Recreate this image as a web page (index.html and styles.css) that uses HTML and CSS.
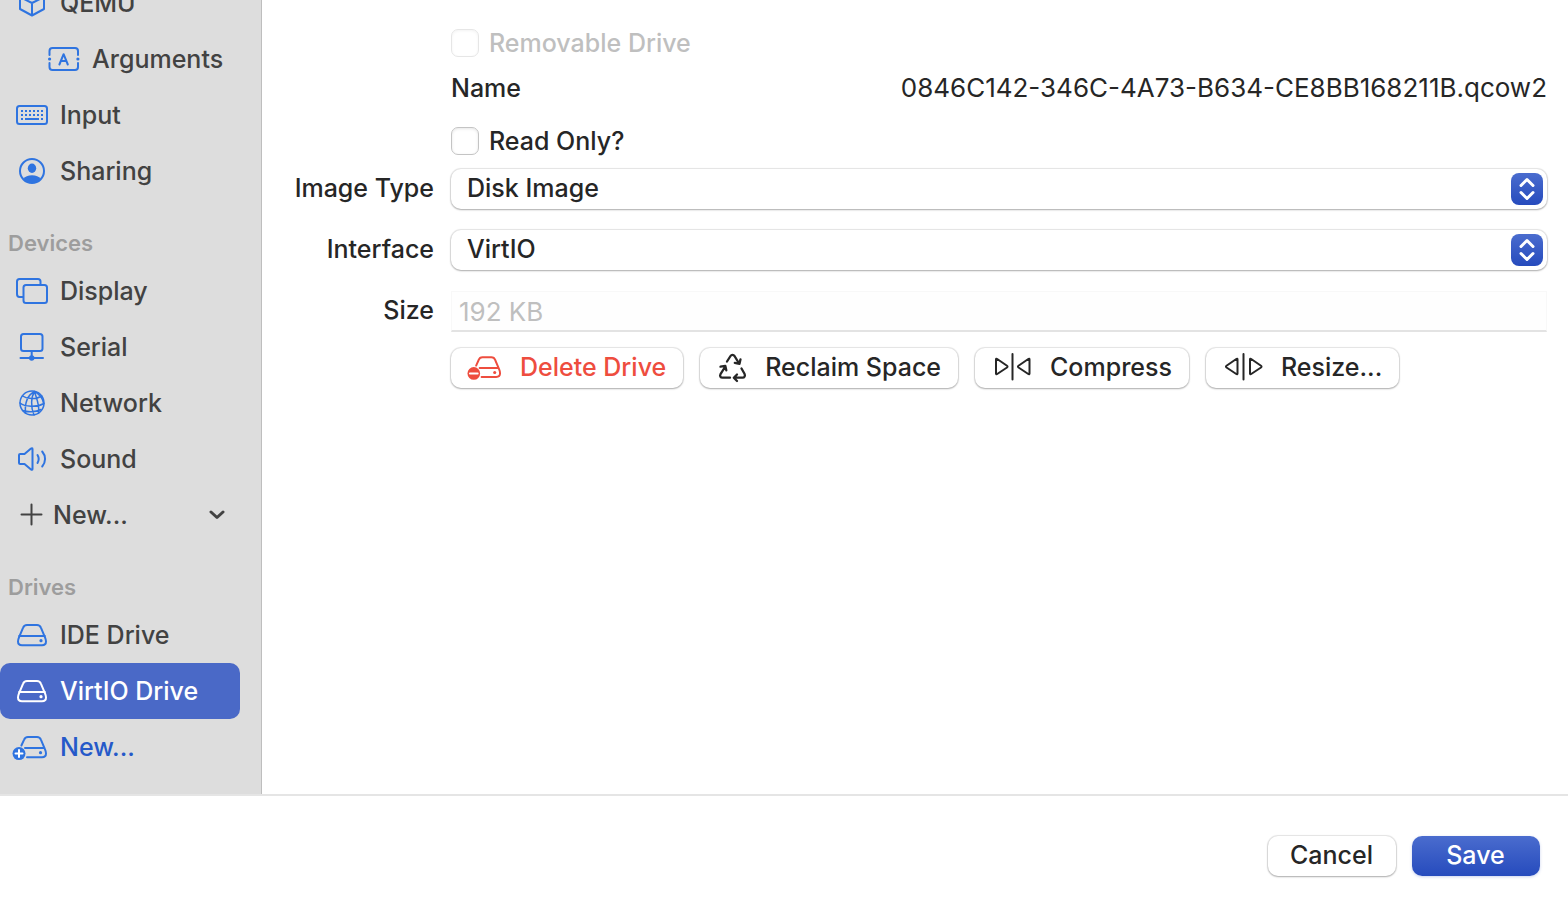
FILE: index.html
```
<!DOCTYPE html>
<html lang="en">
<head>
<meta charset="utf-8">
<meta name="viewport" content="width=device-width, initial-scale=1">
<title>Drive settings</title>
<link rel="stylesheet" href="styles.css">
</head>
<body>
<svg class="defs" aria-hidden="true">
  <symbol id="drive" viewBox="0 0 32 32">
    <path d="M2 22.500C2 20.800 2.400 19.700 3 18.300L7 8.800C7.700 6.800 9 5.900 11 5.900H21C23 5.900 24.300 6.800 25 8.800L29 18.300C29.600 19.700 30 20.800 30 22.500C30 25 28.400 26.200 26 26.200H6C3.600 26.200 2 25 2 22.500Z M3 17H29"/>
    <circle cx="25" cy="21.700" r="1.600" class="solid"/>
  </symbol>
  <symbol id="drive-badged" viewBox="0 0 36 32">
    <path d="M9.400 14.500L12 8.800C12.700 6.800 14 5.900 16 5.900H25C27 5.900 28.300 6.800 29 8.800L33 18.300C33.600 19.700 34 20.800 34 22.500C34 25 32.400 26.200 30 26.200H15 M13 17H32.500"/>
    <circle cx="28.500" cy="21.700" r="1.600" class="solid"/>
    <circle cx="7" cy="22.600" r="6.500" class="solid"/>
  </symbol>
</svg>
<div class="window">
  <div class="body">
    <nav class="sidebar" aria-label="Settings">
      <div class="list">
        <a class="item" href="#qemu"><svg class="icon" width="32" height="32" viewBox="0 0 32 32"><path d="M16 4L28 10V22L16 28.500L4 22V10ZM4 10L16 16L28 10M16 16V28.500"/></svg>QEMU</a>
        <a class="item nested" href="#arguments"><svg class="icon" width="32" height="32" viewBox="0 0 32 32"><path d="M1.500 12V8C1.500 6 2.500 5 4.500 5H27C29 5 30 6 30 8V12M1.500 20V24C1.500 26 2.500 27 4.500 27H27C29 27 30 26 30 24V20M11.400 21.500L15.600 11.200L19.800 21.500M12.800 18H18.400"/><circle cx="1.600" cy="16" r="1.600" class="solid"/><circle cx="29.900" cy="16" r="1.600" class="solid"/></svg>Arguments</a>
        <a class="item" href="#input"><svg class="icon" width="32" height="32" viewBox="0 0 32 32"><rect x="1" y="7" width="30" height="18" rx="2.500"/><path class="keys" d="M5 12H27.500M5 16H27.500"/><path d="M5 20H7M9 20H23M25 20H27" class="butt"/></svg>Input</a>
        <a class="item" href="#sharing"><svg class="icon" width="32" height="32" viewBox="0 0 32 32"><circle cx="16" cy="16" r="12"/><ellipse cx="16" cy="13.300" rx="4.200" ry="4.700" class="solid"/><path class="solid" d="M7.500 24C9 21.500 12 20.300 16 20.300S23 21.500 24.500 24C22 27 19 28 16 28S10 27 7.500 24Z"/></svg>Sharing</a>
        <h2 class="heading">Devices</h2>
        <a class="item" href="#display"><svg class="icon" width="32" height="32" viewBox="0 0 32 32"><rect x="7.500" y="10" width="23.500" height="18" rx="2.500"/><path d="M24.500 9.500V6.500C24.500 4.800 23.500 4 22 4H3.500C2 4 1 5 1 6.500V19C1 20.800 2 22 3.500 22H7"/></svg>Display</a>
        <a class="item" href="#serial"><svg class="icon" width="32" height="32" viewBox="0 0 32 32"><rect x="5" y="3" width="21.500" height="17" rx="2.500"/><path d="M15.700 20V27M4.500 27H27"/><circle cx="15.700" cy="27" r="2.700" class="solid"/></svg>Serial</a>
        <a class="item" href="#network"><svg class="icon" width="32" height="32" viewBox="0 0 32 32"><g class="fine"><circle cx="16" cy="16" r="12"/><path d="M18.500 4.500C12 8 8.500 15 9.500 26.200M18.500 4.500C15 10 14.500 20 18 28M18.500 4.500C20 10 24 18 22.500 26M18.500 4.500C23.500 7 26.500 11 27.500 16M6.500 9C11 12 20 12.800 25.800 9M4 16C9 20 21 20.500 28 16.500M6.500 23.500C11 25 19 25.500 25 22.500"/></g></svg>Network</a>
        <a class="item" href="#sound"><svg class="icon" width="32" height="32" viewBox="0 0 32 32"><path d="M3 12C3 11.300 3.500 11 4.200 11H8.500L15 5.500C15.700 5 16.500 5 16.500 6V26C16.500 27 15.700 27 15 26.500L8.500 21H4.200C3.500 21 3 20.700 3 20ZM21.500 12C23 14.500 23 17.500 21.500 20M26.200 8.500C30 13 30 19 26.200 23.500"/></svg>Sound</a>
        <button class="item add" type="button"><svg class="icon" width="24" height="24" viewBox="0 0 24 24"><path d="M12.500 1.500V21.500M2.500 11.500H22.500"/></svg>New...<svg class="icon chevron" width="16" height="16" viewBox="0 0 16 16"><path d="M2 5L8 10.500L14 5"/></svg></button>
        <h2 class="heading">Drives</h2>
        <a class="item" href="#ide"><svg class="icon" width="32" height="32"><use href="#drive"/></svg>IDE Drive</a>
        <a class="item selected" href="#virtio" aria-current="page"><svg class="icon" width="32" height="32"><use href="#drive"/></svg>VirtIO Drive</a>
        <button class="item new-drive" type="button"><svg class="icon" width="36" height="32" viewBox="0 0 36 32"><use href="#drive-badged"/><path class="mark" d="M3.500 22.600H10.500M7 19.100V26.100"/></svg>New...</button>
      </div>
    </nav>
    <main class="content">
      <form class="form" id="drive-form">
        <label class="check disabled"><input type="checkbox" disabled>Removable Drive</label>
        <div class="pair"><span>Name</span><span class="value">0846C142-346C-4A73-B634-CE8BB168211B.qcow2</span></div>
        <label class="check"><input type="checkbox">Read Only?</label>
        <label class="label" for="image-type">Image Type</label>
        <div class="picker">
          <select id="image-type"><option>Disk Image</option></select>
          <svg class="stepper" viewBox="0 0 32 32" aria-hidden="true"><path d="M10 12.500L16 6.500L22 12.500M10 19.500L16 25.500L22 19.500"/></svg>
        </div>
        <label class="label" for="interface">Interface</label>
        <div class="picker">
          <select id="interface"><option>VirtIO</option></select>
          <svg class="stepper" viewBox="0 0 32 32" aria-hidden="true"><path d="M10 12.500L16 6.500L22 12.500M10 19.500L16 25.500L22 19.500"/></svg>
        </div>
        <label class="label" for="size">Size</label>
        <input class="field value" id="size" type="text" value="192 KB" disabled>
        <div class="actions">
          <button class="button danger" type="button"><svg class="icon" width="35" height="32" viewBox="0 0 36 32"><use href="#drive-badged"/><path class="mark" d="M3 22.600H11"/></svg>Delete Drive</button>
          <button class="button" type="button"><svg class="icon" width="31" height="32" viewBox="0 0 31 32"><path class="bold" d="M11 10.500L14.500 5C15.500 3.500 17.500 3.500 18.500 5L23 12.300M18.800 11.800L23.500 12.800L24.500 8.300M25.500 17.500L28.500 22.700C29.500 24.700 28.500 26.700 26.500 26.700H18.500M21 23.500L17.800 26.700L21 30M14 26.700H6.500C4.500 26.700 3.500 25 4.500 23.200L9.300 15.500M4.500 15.700L9.300 14.800L10.300 19.300"/></svg>Reclaim Space</button>
          <button class="button" type="button"><svg class="icon" width="41" height="32" viewBox="0 0 41 32"><path d="M5 8.500V22.500C5 23.300 5.500 23.500 6.200 23L16 16.500C16.700 16 16.700 15.200 16 14.700L6.200 8C5.500 7.500 5 7.700 5 8.500ZM21.500 3V28.500M38.500 8.500V22.500C38.500 23.300 38 23.500 37.300 23L27.500 16.500C26.800 16 26.800 15.200 27.500 14.700L37.300 8C38 7.500 38.500 7.700 38.500 8.500Z"/></svg>Compress</button>
          <button class="button" type="button"><svg class="icon" width="41" height="32" viewBox="0 0 41 32"><path d="M15.500 8.500V22.500C15.500 23.300 15 23.500 14.300 23L4.500 16.500C3.800 16 3.800 15.200 4.500 14.700L14.300 8C15 7.500 15.500 7.700 15.500 8.500ZM21.500 3V28.500M28 8.500V22.500C28 23.300 28.500 23.500 29.200 23L39 16.500C39.700 16 39.700 15.200 39 14.700L29.200 8C28.500 7.500 28 7.700 28 8.500Z"/></svg>Resize...</button>
        </div>
      </form>
    </main>
  </div>
  <footer class="footer">
    <button class="button dialog" type="button">Cancel</button>
    <button class="button dialog primary" type="submit" form="drive-form">Save</button>
  </footer>
</div>
</body>
</html>
```
FILE: styles.css
```
* { box-sizing: border-box; }

body {
  margin: 0;
  background: #fff;
  color: #262626;
  font: 450 25px/32px Inter, "Liberation Sans", sans-serif;
}

button, input, select { margin: 0; font: inherit; color: inherit; }

.defs { display: none; }

.window { display: flex; flex-direction: column; height: 100vh; }
.body { display: flex; flex: 1; min-height: 0; }

.sidebar {
  flex: none;
  width: 262px;
  overflow: hidden;
  background: #dddddd;
  border-right: 1px solid #bebebe;
}

/* The list is scrolled part of the way through its first row. */
.list { margin-top: -25px; padding-right: 21px; }

.item {
  display: flex;
  align-items: center;
  gap: 12px;
  width: 100%;
  height: 56px;
  padding: 0 16px;
  border: 0;
  border-radius: 10px;
  background: none;
  color: #424242;
  text-align: left;
  text-decoration: none;
}

.nested { padding-left: 48px; }
.add { padding: 0 15px 0 19px; gap: 10px; }
.selected { background: #4a69c7; color: #fff; }
.new-drive { padding-left: 12px; color: #2559c9; }
.chevron { margin-left: auto; }

.heading {
  margin: 0;
  padding: 28px 8px 4px;
  color: #9d9d9d;
  font-size: 22px;
  font-weight: 600;
  line-height: 32px;
}

.icon {
  flex: none;
  fill: none;
  stroke: currentColor;
  stroke-width: 2;
  stroke-linecap: round;
  stroke-linejoin: round;
}

.item .icon { color: #2f74e0; }
.selected .icon { color: #fff; }
.add .icon { color: #424242; }
.item .chevron { stroke-width: 3; }
.solid { fill: currentColor; stroke: none; }
.fine { stroke-width: 1.5; }
.bold { stroke-width: 2.3; }
.keys { stroke-linecap: butt; stroke-dasharray: 2 2; }
.butt { stroke-linecap: butt; }
.mark { stroke: #fff; }

.content { flex: 1; min-width: 0; padding: 28px 21px 0 26px; }

.form {
  display: grid;
  grid-template-columns: 146px minmax(0, 1fr);
  column-gap: 17px;
}

.check, .pair, .actions { grid-column: 2; }

.check { display: flex; align-items: center; gap: 10px; height: 30px; }
.pair + .check { margin: 22px 0 13px; }
.disabled { color: #bfbfbf; }

.check input {
  appearance: none;
  width: 28px;
  height: 28px;
  border: 1px solid #c4c4c4;
  border-radius: 7px;
  background: #fff;
  box-shadow: inset 0 1px 3px #0000001a;
}

.check input:disabled { border-color: #e6e6e6; box-shadow: inset 0 1px 3px #0000000d; }

.pair { display: flex; justify-content: space-between; gap: 16px; margin-top: 14px; }

.value { font-size: 26px; font-weight: 400; }

.label { height: 40px; line-height: 38px; text-align: right; }

.picker { position: relative; margin-bottom: 21px; }

.picker select {
  appearance: none;
  display: block;
  width: 100%;
  height: 40px;
  padding: 0 48px 2px 16px;
  border: 0;
  border-radius: 10px;
  background: #fff;
  box-shadow: 0 0 1px 1px #0000001a, 0 1px 2px #00000040;
}

.stepper {
  position: absolute;
  top: 4px;
  right: 4px;
  width: 32px;
  height: 32px;
  border-radius: 8px;
  background: linear-gradient(#4a6cce, #264bbd);
  fill: none;
  stroke: #fff;
  stroke-width: 3;
  stroke-linecap: round;
  stroke-linejoin: round;
  pointer-events: none;
}

.field {
  width: 100%;
  height: 41px;
  padding: 0 7px;
  border: 1px solid #f8f8f8;
  border-bottom: 2px solid #e3e3e3;
  background: #fefefe;
  color: #bfbfbf;
}

.actions { display: flex; flex-wrap: wrap; gap: 17px; margin-top: 16px; }

.button {
  display: flex;
  align-items: center;
  gap: 18px;
  height: 40px;
  padding: 0 17px 2px 16px;
  border: 0;
  border-radius: 10px;
  background: #fff;
  box-shadow: 0 0 1px 1px #0000001a, 0 1px 2px #00000040;
  white-space: nowrap;
}

.danger { color: #ee4d3e; }

.footer {
  display: flex;
  justify-content: flex-end;
  gap: 16px;
  height: 108px;
  padding: 40px 28px 0;
  border-top: 2px solid #e5e5e5;
}

.dialog { justify-content: center; width: 128px; }

.primary {
  background: linear-gradient(#4a6cce, #264bbd);
  box-shadow: 0 1px 3px #264bbd40;
  color: #fff;
  font-weight: 500;
}
```
